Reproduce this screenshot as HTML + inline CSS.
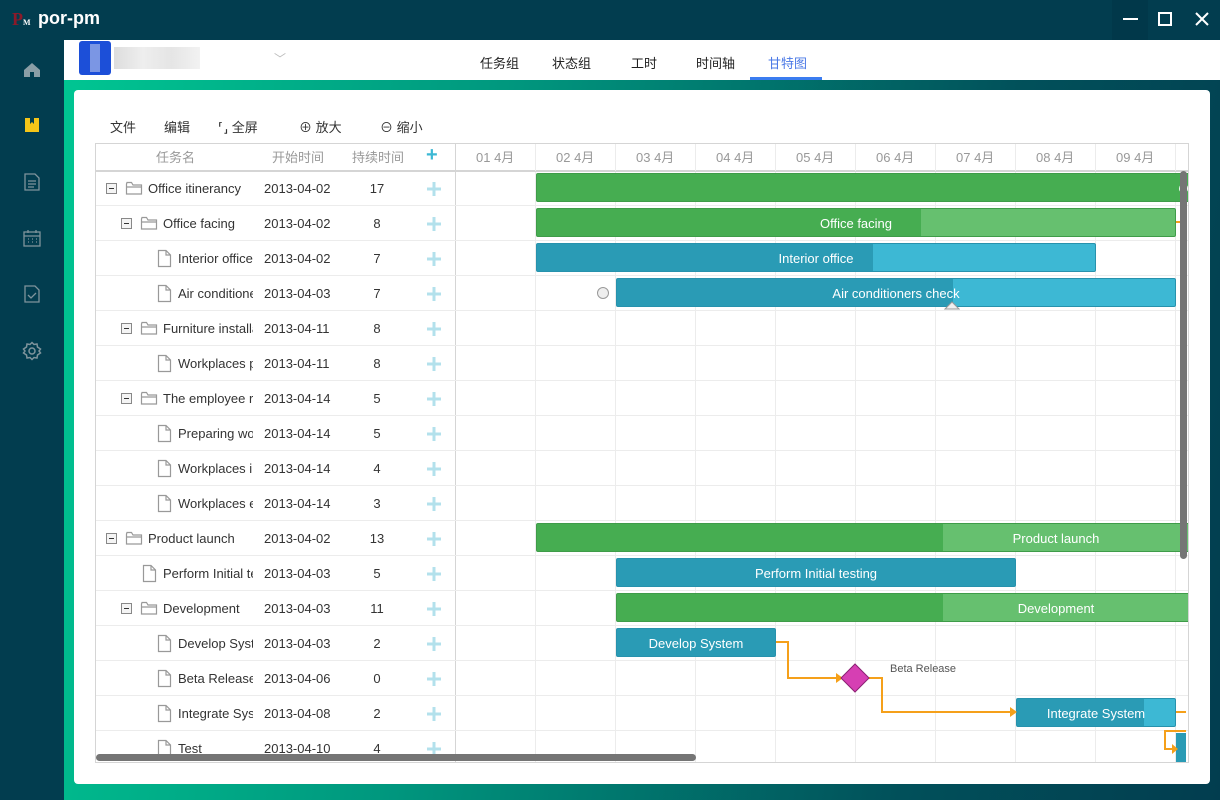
<!DOCTYPE html>
<html><head><meta charset="utf-8"><style>
*{box-sizing:border-box;margin:0;padding:0}
body{width:1220px;height:800px;overflow:hidden;background:#023d4f;font-family:"Liberation Sans","Noto Sans CJK SC",sans-serif;position:relative;font-size:13px}
.a{position:absolute}
#title{left:0;top:0;width:1220px;height:40px;background:#023d4f}
#side{left:0;top:40px;width:64px;height:760px;background:#023d4f}
#main{left:64px;top:80px;width:1156px;height:720px;background:linear-gradient(100deg,#00c592 0%,#00977e 35%,#01505a 75%,#023d4f 100%)}
#top{left:64px;top:40px;width:1156px;height:40px;background:#fff}
#card{left:74px;top:90px;width:1136px;height:694px;background:#fff;border-radius:4px}
.tab{top:53px;font-size:13px;color:#222}
.tb{top:117px;font-size:13px;color:#333}
#grid{left:95px;top:143px;width:1094px;height:620px;border:1px solid #d5d5d5;overflow:hidden;background:#fff}
.hd{top:0;height:27px;border-bottom:1px solid #d5d5d5;color:#999;font-size:13px;line-height:27px}
.hl{height:1px;background:#ececec}
.bar{height:29px;border-radius:2px;color:#fff;font-size:13px;line-height:29px;text-align:center;overflow:hidden;white-space:nowrap}
.g{background:#66c06f;border:1px solid #3f9c49}
.b{background:#3db8d4;border:1px solid #2792ad}
.plus{color:#a8dcea;font-size:20px;font-weight:bold}
</style></head><body>
<div id="title" class="a"></div>
<div class="a" style="left:12px;top:9px;width:20px;height:22px;font:bold 18px 'Liberation Serif';color:#8b1a2a">P<span style="font-size:8px;color:#fff">M</span></div>
<div class="a" style="left:38px;top:8px;color:#fff;font-size:18px;font-weight:bold">por-pm</div>
<div class="a" style="left:1112px;top:0;width:36px;height:40px;background:#01384a"></div>
<div class="a" style="left:1123px;top:18px;width:15px;height:2px;background:#fff"></div>
<div class="a" style="left:1158px;top:12px;width:14px;height:14px;border:2px solid #fff"></div>
<svg class="a" style="left:1194px;top:11px" width="16" height="16"><path d="M2 2L14 14M14 2L2 14" stroke="#fff" stroke-width="2"/></svg>
<div id="side" class="a"></div>
<svg class="a" style="left:22px;top:60px" width="20" height="20" viewBox="0 0 20 20"><path d="M2 10 L10 3 L18 10 V17 H12 V12 H8 V17 H2Z" fill="#8a9ea6"/></svg>
<svg class="a" style="left:24px;top:117px" width="16" height="16"><path d="M1 1H15V15H1Z" fill="#f5c518"/><path d="M6 1V7L8 5L10 7V1" fill="#023d4f"/></svg>
<svg class="a" style="left:24px;top:173px" width="16" height="18" fill="none" stroke="#7f949c" stroke-width="1.3"><path d="M1 1H11L15 5V17H1Z M4 8H12 M4 11H12 M4 14H10"/></svg>
<svg class="a" style="left:23px;top:229px" width="18" height="18" fill="none" stroke="#7f949c" stroke-width="1.3"><rect x="1" y="3" width="16" height="14"/><path d="M1 7H17 M5 1V4 M13 1V4 M5 10H6 M9 10H10 M13 10H14 M5 13H6 M9 13H10 M13 13H14"/></svg>
<svg class="a" style="left:24px;top:285px" width="16" height="18" fill="none" stroke="#7f949c" stroke-width="1.3"><path d="M1 1H11L15 5V17H1Z M4 10L7 13L12 8"/></svg>
<svg class="a" style="left:22px;top:341px" width="20" height="20" fill="none" stroke="#7f949c" stroke-width="1.5"><circle cx="10" cy="10" r="3"/><path d="M10 1.5L12 3.5L15 3L15.5 6L18.5 8L17 10L18.5 12L15.5 14L15 17L12 16.5L10 18.5L8 16.5L5 17L4.5 14L1.5 12L3 10L1.5 8L4.5 6L5 3L8 3.5Z"/></svg>
<div id="top" class="a"></div>
<div class="a" style="left:79px;top:41px;width:32px;height:34px;background:#1c4fd8;border-radius:3px"></div>
<div class="a" style="left:90px;top:44px;width:10px;height:28px;background:#7b96e4"></div>
<div class="a" style="left:114px;top:47px;width:86px;height:22px;background:linear-gradient(90deg,#ddd,#eee,#e5e5e5,#f2f2f2)"></div>
<div class="a" style="left:274px;top:50px;color:#bbb;font-size:12px">﹀</div>
<div class="a tab" style="left:480px">任务组</div>
<div class="a tab" style="left:552px">状态组</div>
<div class="a tab" style="left:631px">工时</div>
<div class="a tab" style="left:696px">时间轴</div>
<div class="a tab" style="left:768px;color:#4a78e6">甘特图</div>
<div class="a" style="left:750px;top:77px;width:72px;height:3px;background:#3b7cf0"></div>
<div id="main" class="a"></div>
<div id="card" class="a"></div>
<div class="a tb" style="left:110px">文件</div>
<div class="a tb" style="left:164px">编辑</div>
<div class="a tb" style="left:218px">⸢⸥ 全屏</div>
<div class="a tb" style="left:299px">⊕ 放大</div>
<div class="a tb" style="left:380px">⊖ 缩小</div>

<div id="grid" class="a">
<div class="a hd" style="left:0;width:1093px"></div>
<div class="a hd" style="left:60px;border:0">任务名</div>
<div class="a hd" style="left:176px;border:0">开始时间</div>
<div class="a hd" style="left:256px;border:0">持续时间</div>
<div class="a plus" style="left:330px;top:0;color:#3db8d4">+</div>
<div class="a" style="left:359px;top:0;width:1px;height:619px;background:#d5d5d5"></div>
<div class="a hd" style="left:380px;border:0">01 4月</div><div class="a hd" style="left:460px;border:0">02 4月</div><div class="a hd" style="left:540px;border:0">03 4月</div><div class="a hd" style="left:620px;border:0">04 4月</div><div class="a hd" style="left:700px;border:0">05 4月</div><div class="a hd" style="left:780px;border:0">06 4月</div><div class="a hd" style="left:860px;border:0">07 4月</div><div class="a hd" style="left:940px;border:0">08 4月</div><div class="a hd" style="left:1020px;border:0">09 4月</div>
<div class="a" style="left:439px;top:0;width:1px;height:619px;background:#ececec"></div><div class="a" style="left:519px;top:0;width:1px;height:619px;background:#ececec"></div><div class="a" style="left:599px;top:0;width:1px;height:619px;background:#ececec"></div><div class="a" style="left:679px;top:0;width:1px;height:619px;background:#ececec"></div><div class="a" style="left:759px;top:0;width:1px;height:619px;background:#ececec"></div><div class="a" style="left:839px;top:0;width:1px;height:619px;background:#ececec"></div><div class="a" style="left:919px;top:0;width:1px;height:619px;background:#ececec"></div><div class="a" style="left:999px;top:0;width:1px;height:619px;background:#ececec"></div><div class="a" style="left:1079px;top:0;width:1px;height:619px;background:#ececec"></div>
<div class="a" style="left:0;top:27px;width:1093px;height:1px;background:#d5d5d5"></div>
<div class="a hl" style="top:61px;left:0;width:1093px"></div><div class="a hl" style="top:96px;left:0;width:1093px"></div><div class="a hl" style="top:131px;left:0;width:1093px"></div><div class="a hl" style="top:166px;left:0;width:1093px"></div><div class="a hl" style="top:201px;left:0;width:1093px"></div><div class="a hl" style="top:236px;left:0;width:1093px"></div><div class="a hl" style="top:271px;left:0;width:1093px"></div><div class="a hl" style="top:306px;left:0;width:1093px"></div><div class="a hl" style="top:341px;left:0;width:1093px"></div><div class="a hl" style="top:376px;left:0;width:1093px"></div><div class="a hl" style="top:411px;left:0;width:1093px"></div><div class="a hl" style="top:446px;left:0;width:1093px"></div><div class="a hl" style="top:481px;left:0;width:1093px"></div><div class="a hl" style="top:516px;left:0;width:1093px"></div><div class="a hl" style="top:551px;left:0;width:1093px"></div><div class="a hl" style="top:586px;left:0;width:1093px"></div>

<svg class="a" style="left:0;top:27px" width="360" height="600" font-family="Liberation Sans, sans-serif" font-size="13">
<defs>
<g id="mn"><rect x="0.5" y="0.5" width="10" height="10" fill="#f4f4f4" stroke="#888"/><path d="M3 5.5H8" stroke="#333"/></g>
<g id="fd" fill="none" stroke="#999" stroke-width="1.2"><path d="M0.5 3V13H15.5V4H7L5.5 1.5H1Z M0.5 6H15.5"/></g>
<g id="fl" fill="none" stroke="#999" stroke-width="1.2"><path d="M0.5 0.5H8L12.5 5V16.5H0.5Z M8 0.5V5H12.5"/></g>
</defs>
<svg width="157" height="600">
<g fill="#333">
<use href="#mn" x="10" y="12"/><use href="#fd" x="30" y="10"/><text x="52" y="22">Office itinerancy</text>
<use href="#mn" x="25" y="47"/><use href="#fd" x="45" y="45"/><text x="67" y="57">Office facing</text>
<use href="#fl" x="62" y="79"/><text x="82" y="92" >Interior office</text>
<use href="#fl" x="62" y="114"/><text x="82" y="127">Air conditioners check</text>
<use href="#mn" x="25" y="152"/><use href="#fd" x="45" y="150"/><text x="67" y="162">Furniture installation</text>
<use href="#fl" x="62" y="184"/><text x="82" y="197">Workplaces preparation</text>
<use href="#mn" x="25" y="222"/><use href="#fd" x="45" y="220"/><text x="67" y="232">The employee relocation</text>
<use href="#fl" x="62" y="254"/><text x="82" y="267">Preparing workplaces</text>
<use href="#fl" x="62" y="289"/><text x="82" y="302">Workplaces importation</text>
<use href="#fl" x="62" y="324"/><text x="82" y="337">Workplaces exportation</text>
<use href="#mn" x="10" y="362"/><use href="#fd" x="30" y="360"/><text x="52" y="372">Product launch</text>
<use href="#fl" x="47" y="394"/><text x="67" y="407">Perform Initial testing</text>
<use href="#mn" x="25" y="432"/><use href="#fd" x="45" y="430"/><text x="67" y="442">Development</text>
<use href="#fl" x="62" y="464"/><text x="82" y="477">Develop System</text>
<use href="#fl" x="62" y="499"/><text x="82" y="512">Beta Release</text>
<use href="#fl" x="62" y="534"/><text x="82" y="547">Integrate System</text>
<use href="#fl" x="62" y="569"/><text x="82" y="582">Test</text>
</g>
</svg>
<g fill="#333">
<text x="168" y="22">2013-04-02</text><text x="168" y="57">2013-04-02</text><text x="168" y="92">2013-04-02</text><text x="168" y="127">2013-04-03</text><text x="168" y="162">2013-04-11</text><text x="168" y="197">2013-04-11</text><text x="168" y="232">2013-04-14</text><text x="168" y="267">2013-04-14</text><text x="168" y="302">2013-04-14</text><text x="168" y="337">2013-04-14</text><text x="168" y="372">2013-04-02</text><text x="168" y="407">2013-04-03</text><text x="168" y="442">2013-04-03</text><text x="168" y="477">2013-04-03</text><text x="168" y="512">2013-04-06</text><text x="168" y="547">2013-04-08</text><text x="168" y="582">2013-04-10</text>
</g>
<g fill="#333" text-anchor="middle">
<text x="281" y="22">17</text><text x="281" y="57">8</text><text x="281" y="92">7</text><text x="281" y="127">7</text><text x="281" y="162">8</text><text x="281" y="197">8</text><text x="281" y="232">5</text><text x="281" y="267">5</text><text x="281" y="302">4</text><text x="281" y="337">3</text><text x="281" y="372">13</text><text x="281" y="407">5</text><text x="281" y="442">11</text><text x="281" y="477">2</text><text x="281" y="512">0</text><text x="281" y="547">2</text><text x="281" y="582">4</text>
</g>
<g stroke="#b3e1ec" stroke-width="3">
<path d="M338 11V25M331 18H345"/><path d="M338 46V60M331 53H345"/><path d="M338 81V95M331 88H345"/><path d="M338 116V130M331 123H345"/><path d="M338 151V165M331 158H345"/><path d="M338 186V200M331 193H345"/><path d="M338 221V235M331 228H345"/><path d="M338 256V270M331 263H345"/><path d="M338 291V305M331 298H345"/><path d="M338 326V340M331 333H345"/><path d="M338 361V375M331 368H345"/><path d="M338 396V410M331 403H345"/><path d="M338 431V445M331 438H345"/><path d="M338 466V480M331 473H345"/><path d="M338 501V515M331 508H345"/><path d="M338 536V550M331 543H345"/><path d="M338 571V585M331 578H345"/>
</g>
</svg>

<div class="a bar g" style="left:440px;top:29px;width:1378px;background:#46ad51">Office itinerancy</div>
<div class="a bar g" style="left:440px;top:64px;width:640px;background:linear-gradient(90deg,#46ad51 384px,#66c06f 384px)">Office facing</div>
<div class="a bar b" style="left:440px;top:99px;width:560px;background:linear-gradient(90deg,#2a9bb5 336px,#3db8d4 336px)">Interior office</div>
<div class="a bar b" style="left:520px;top:134px;width:560px;background:linear-gradient(90deg,#2a9bb5 336px,#3db8d4 336px)">Air conditioners check</div>
<div class="a" style="left:501px;top:143px;width:12px;height:12px;border-radius:50%;background:#eee;border:1px solid #999"></div>
<svg class="a" style="left:848px;top:157px" width="16" height="9"><path d="M1 8L8 1L15 8Z" fill="#f0f0f0" stroke="#999"/></svg>
<div class="a bar g" style="left:440px;top:379px;width:1040px;background:linear-gradient(90deg,#46ad51 406px,#66c06f 406px)">Product launch</div>
<div class="a bar b" style="left:520px;top:414px;width:400px;background:#2a9bb5">Perform Initial testing</div>
<div class="a bar g" style="left:520px;top:449px;width:880px;background:linear-gradient(90deg,#46ad51 326px,#66c06f 326px)">Development</div>
<div class="a bar b" style="left:520px;top:484px;width:160px;background:#2a9bb5">Develop System</div>
<div class="a bar b" style="left:920px;top:554px;width:160px;background:linear-gradient(90deg,#2a9bb5 127px,#3db8d4 127px)">Integrate System</div>
<div class="a" style="left:1080px;top:589px;width:10px;height:30px;background:#2a9bb5"></div>
<svg class="a" style="left:0;top:0" width="1093" height="619">
<g fill="none" stroke="#f5a01a" stroke-width="2">
<path d="M680 498H692V534H740"/><path d="M773 534H786V568H914"/><path d="M1080 568H1090"/><path d="M1090 587H1069V605H1078"/><path d="M1080 78H1090"/>
</g>
<g fill="#f5a01a"><path d="M740 529L747 534L740 539Z"/><path d="M914 563L921 568L914 573Z"/><path d="M1076 600L1082 605L1076 610Z"/></g>
<path d="M759 520L773 534L759 548L745 534Z" fill="#d63fb3" stroke="#8a1f72"/>
<text x="794" y="528" font-family="Liberation Sans, sans-serif" font-size="11" fill="#555">Beta Release</text>
</svg>
<div class="a" style="left:1084px;top:27px;width:7px;height:388px;background:#757575;border-radius:4px"></div>
<div class="a" style="left:0;top:610px;width:600px;height:7px;background:#757575;border-radius:4px"></div>
</div>
</body></html>
